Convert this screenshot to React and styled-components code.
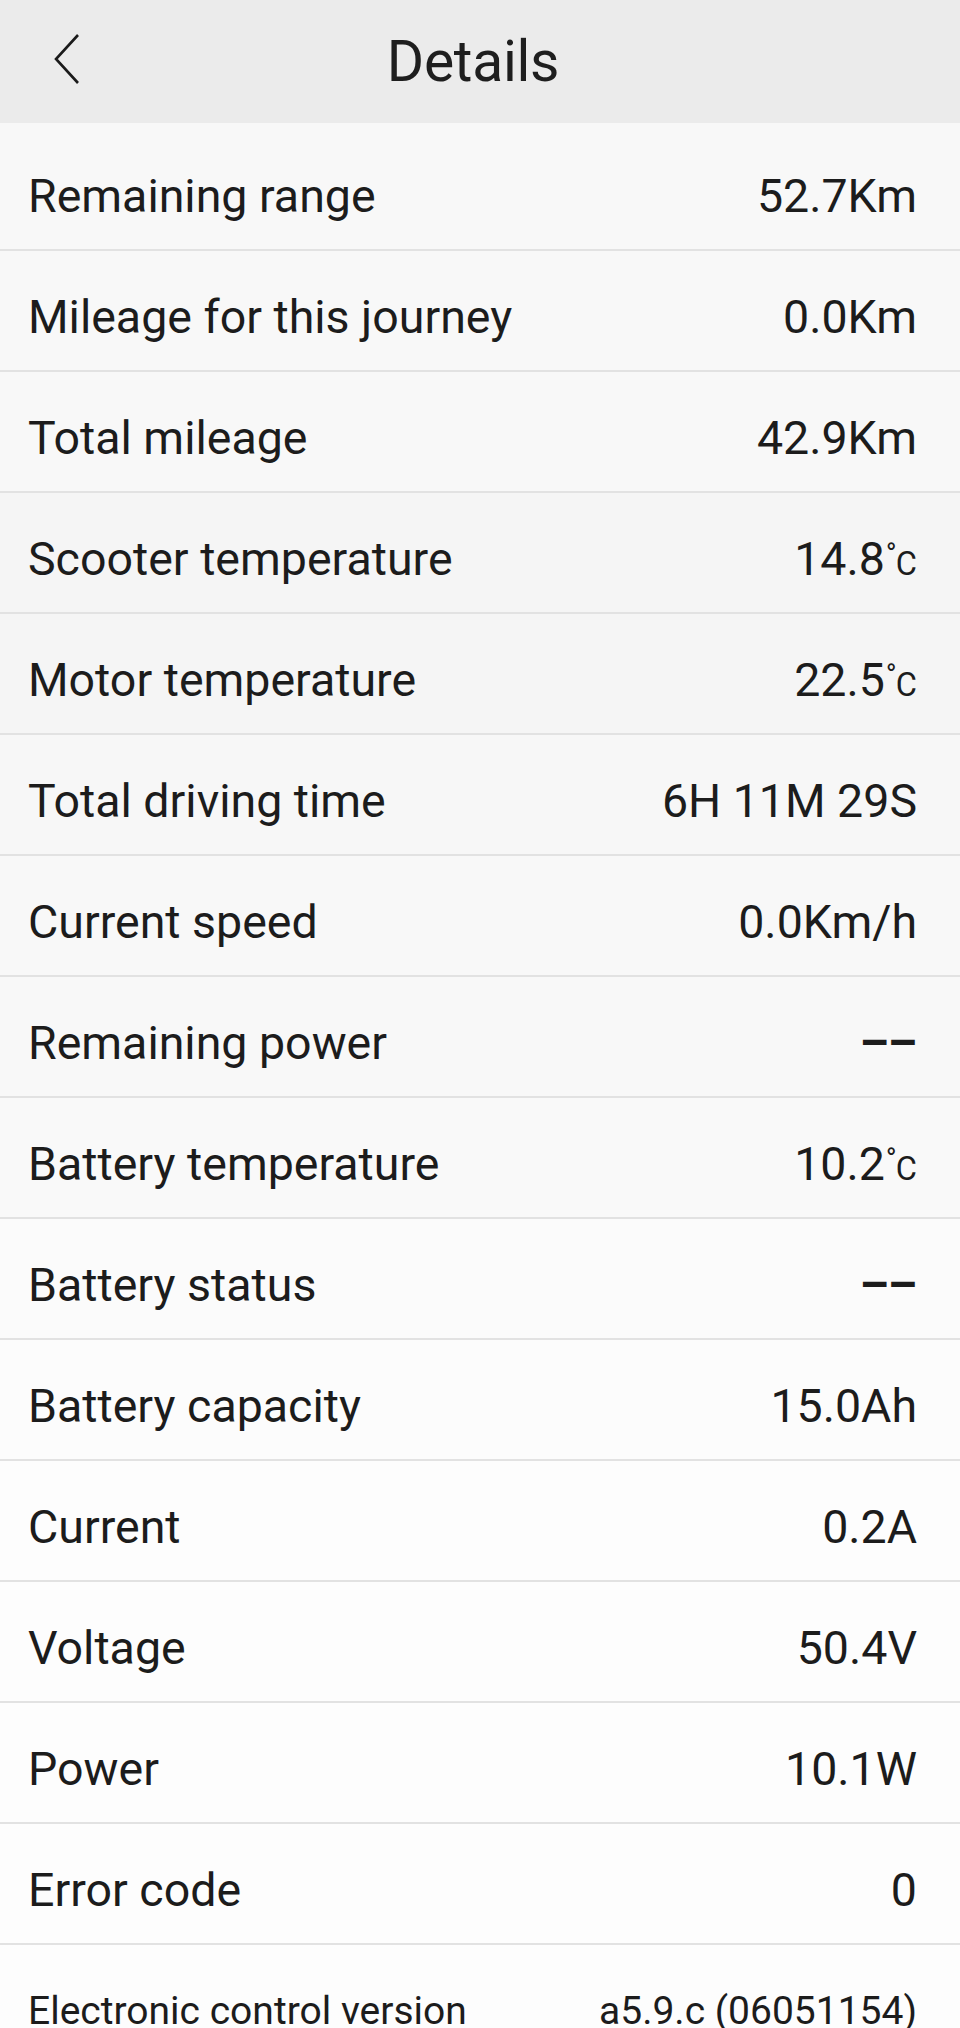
import React from "react";
import styled, { createGlobalStyle } from "styled-components";

const GlobalStyle = createGlobalStyle`
  html, body {
    margin: 0;
    padding: 0;
    background: #fdfdfd;
  }
  body {
    font-family: Roboto, "Noto Sans", "Liberation Sans", sans-serif;
    color: #1c1c1c;
  }
`;

const Page = styled.div`
  width: 960px;
  height: 2028px;
  overflow: hidden;
  background: #fdfdfd;
`;

const Header = styled.header`
  height: 123px;
  display: flex;
  align-items: center;
  background: #ebebeb;
`;

const BackButton = styled.button`
  width: 96px;
  height: 100%;
  border: none;
  background: transparent;
  padding: 0 0 6px 53px;
  display: flex;
  align-items: center;
  cursor: pointer;
`;

const Title = styled.h1`
  flex: 1;
  margin: 0;
  text-align: center;
  font-size: 57px;
  font-weight: 400;
  color: #1e1e1e;
  letter-spacing: -0.3px;
`;

const Spacer = styled.div`
  width: 110px;
`;

const List = styled.div`
  display: flex;
  flex-direction: column;
`;

const Row = styled.div`
  height: ${(p) => (p.first ? "128px" : "121px")};
  box-sizing: border-box;
  padding: ${(p) => (p.first ? "19px" : "13px")} 43px 0 28px;
  display: flex;
  align-items: center;
  justify-content: space-between;
  background: ${(p) => p.bg};
  border-bottom: 2px solid #e2e2e2;
  font-size: ${(p) => (p.small ? "39px" : "46.5px")};
`;

const Label = styled.span``;

const Value = styled.span`
  white-space: nowrap;
`;

const Dashes = styled.span`
  font-weight: 700;
  letter-spacing: -1px;
  margin-right: 1px;
`;

const Unit = styled.span`
  font-size: 0.7em;
  margin-left: 1px;
`;

const Deg = styled.span`
  vertical-align: 0.38em;
  font-size: 0.9em;
  margin-right: -1px;
`;

const Celsius = () => (
  <Unit>
    <Deg>°</Deg>C
  </Unit>
);

const rows = [
  { label: "Remaining range", value: "52.7Km", bg: "#f8f8f8" },
  { label: "Mileage for this journey", value: "0.0Km", bg: "#f8f8f8" },
  { label: "Total mileage", value: "42.9Km", bg: "#f8f8f8" },
  { label: "Scooter temperature", value: "14.8", temp: true, bg: "#f5f5f5" },
  { label: "Motor temperature", value: "22.5", temp: true, bg: "#f5f5f5" },
  { label: "Total driving time", value: "6H 11M 29S", bg: "#f7f7f7" },
  { label: "Current speed", value: "0.0Km/h", bg: "#f8f8f8" },
  { label: "Remaining power", empty: true, bg: "#f8f8f8" },
  { label: "Battery temperature", value: "10.2", temp: true, bg: "#f9f9f9" },
  { label: "Battery status", empty: true, bg: "#fbfbfb" },
  { label: "Battery capacity", value: "15.0Ah", bg: "#fcfcfc" },
  { label: "Current", value: "0.2A", bg: "#fdfdfd" },
  { label: "Voltage", value: "50.4V", bg: "#fdfdfd" },
  { label: "Power", value: "10.1W", bg: "#fdfdfd" },
  { label: "Error code", value: "0", bg: "#fdfdfd" },
  { label: "Electronic control version", value: "a5.9.c (06051154)", bg: "#fdfdfd", small: true },
];

const Chevron = () => (
  <svg width="28" height="52" viewBox="0 0 28 52" fill="none">
    <polyline points="25,2 3,26 25,50" stroke="#1a1a1a" strokeWidth="2.6" strokeLinejoin="miter" />
  </svg>
);

export default function App() {
  return (
    <Page>
      <GlobalStyle />
      <Header>
        <BackButton aria-label="Back">
          <Chevron />
        </BackButton>
        <Title>Details</Title>
        <Spacer />
      </Header>
      <List>
        {rows.map((r, i) => (
          <Row key={r.label} first={i === 0} bg={r.bg} small={r.small}>
            <Label>{r.label}</Label>
            <Value>
              {r.empty ? <Dashes>––</Dashes> : r.value}
              {r.temp && <Celsius />}
            </Value>
          </Row>
        ))}
      </List>
    </Page>
  );
}
